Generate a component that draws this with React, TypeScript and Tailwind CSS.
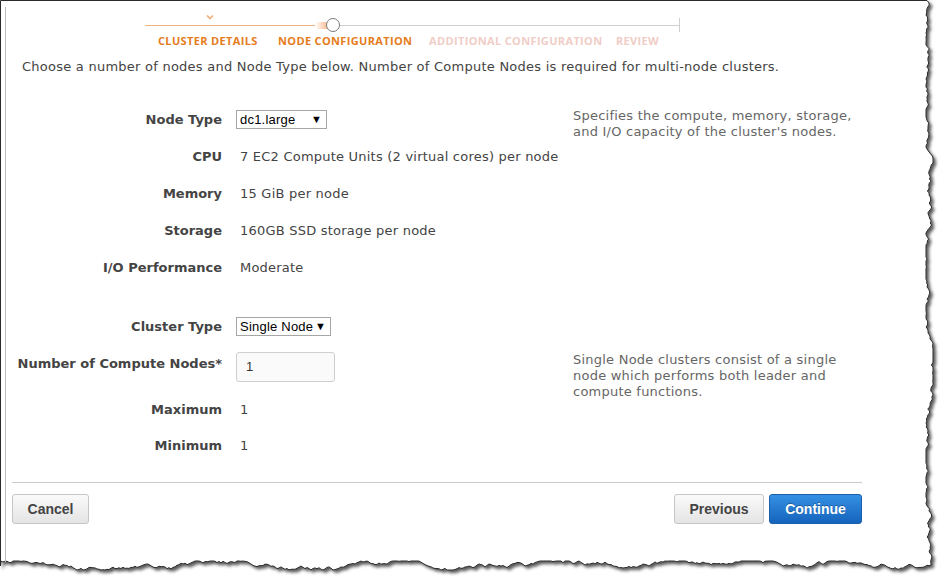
import React from "react";

function rand(seed: number) {
  let s = seed;
  return () => {
    s = (s * 9301 + 49297) % 233280;
    return s / 233280;
  };
}

function paperPath() {
  const r = rand(7);
  const pts: string[] = ["M0.5,0.5", "L927,0.5"];
  let x = 929;
  for (let y = 3; y <= 566; y += 2) {
    x = Math.max(926, Math.min(933, x + (r() - 0.5) * 3.6));
    pts.push(`L${x.toFixed(1)},${y}`);
  }
  let y = 567;
  for (let xx = Math.round(x) - 2; xx >= 0; xx -= 2) {
    y = Math.max(561, Math.min(570, y + (r() - 0.5) * 3.4));
    pts.push(`L${xx},${y.toFixed(1)}`);
  }
  pts.push("L0.5,566", "Z");
  return pts.join(" ");
}

const Row = ({
  label,
  children,
  help,
  h = "h-[37px]",
}: {
  label: string;
  children?: React.ReactNode;
  help?: React.ReactNode;
  h?: string;
}) => (
  <div className={`flex items-center ${h}`}>
    <div className="w-[222px] text-right font-bold text-[13px] text-[#444] leading-4">{label}</div>
    <div className="ml-[18px] w-[333px] text-[13px] tracking-[0.22px] text-[#444] leading-4">{children}</div>
    {help ? (
      <div className="self-start pt-[7px] text-[13px] leading-4 tracking-[0.23px] text-[#666]">{help}</div>
    ) : null}
  </div>
);

const FakeSelect = ({ text, w }: { text: string; w: string }) => (
  <div
    className={`flex items-center justify-between ${w} h-[19px] border border-[#a6a6a6] bg-white pl-[3px] pr-[4px] font-['Liberation_Sans',Arial,sans-serif] text-[13px] text-black`}
  >
    <span>{text}</span>
    <span className="text-[11px] leading-none">▼</span>
  </div>
);

export default function App() {
  return (
    <div className="relative w-[943px] h-[583px] bg-white overflow-hidden font-['DejaVu_Sans',Verdana,sans-serif]">
      <svg className="absolute inset-0" width="943" height="583">
        <defs>
          <filter id="sh" x="-5%" y="-5%" width="110%" height="110%">
            <feDropShadow dx="2.5" dy="2.5" stdDeviation="1.6" floodColor="#000" floodOpacity="0.65" />
          </filter>
        </defs>
        <path d={paperPath()} fill="#fff" stroke="#2a2a2a" strokeWidth="1" filter="url(#sh)" />
      </svg>
      <div className="absolute left-[5px] top-[7px] h-[555px] w-px bg-[#bdbdbd]" />

      <div className="relative">
        {/* stepper */}
        <div className="pt-[18px] pl-[145px]">
          <div className="relative flex h-[14px] w-[535px] items-center">
            <div className="h-px w-[170px] bg-[#eeb27e]" />
            <div className="h-[7px] w-[14px] -mr-[3px] rounded-l-full bg-gradient-to-r from-[#ffffff] to-[#f6b384]" />
            <div className="h-[14px] w-[14px] rounded-full border-[1.5px] border-[#7a7a7a] bg-white" />
            <div className="h-px flex-1 bg-[#cfcfcf]" />
            <div className="h-[14px] w-px bg-[#cfcfcf]" />
            <svg className="absolute left-[61px] -top-[4px]" width="8" height="6" viewBox="0 0 8 6">
              <path d="M1 1.5 L4 4.5 L7 1.5" stroke="#f0ad78" strokeWidth="1.6" fill="none" />
            </svg>
          </div>
          <div className="mt-[2px] flex pl-[13px] font-['Open_Sans',sans-serif] text-[11px] font-bold leading-[14px] tracking-[0.35px]">
            <span className="w-[120px] text-[#e57c1c]">CLUSTER DETAILS</span>
            <span className="w-[151px] text-[#e57c1c]">NODE CONFIGURATION</span>
            <span className="w-[187px] text-[#f0cdc6]">ADDITIONAL CONFIGURATION</span>
            <span className="text-[#f0cdc6]">REVIEW</span>
          </div>
        </div>

        <div className="mt-[11px] pl-[22px] text-[13px] leading-4 tracking-[0.245px] text-[#444]">
          Choose a number of nodes and Node Type below. Number of Compute Nodes is required for multi-node clusters.
        </div>

        <div className="mt-[26px]">
          <Row
            label="Node Type"
            help={
              <>
                Specifies the compute, memory, storage,
                <br />
                and I/O capacity of the cluster's nodes.
              </>
            }
          >
            <div className="-ml-[4px]">
              <FakeSelect text="dc1.large" w="w-[91px]" />
            </div>
          </Row>
          <Row label="CPU">7 EC2 Compute Units (2 virtual cores) per node</Row>
          <Row label="Memory">15 GiB per node</Row>
          <Row label="Storage">160GB SSD storage per node</Row>
          <Row label="I/O Performance">Moderate</Row>
          <div className="h-[22px]" />
          <Row label="Cluster Type">
            <div className="-ml-[4px]">
              <FakeSelect text="Single Node" w="w-[95px]" />
            </div>
          </Row>
          <div className="flex h-[47px] items-start">
            <div className="w-[222px] pt-[11px] text-right font-bold text-[13px] leading-4 text-[#444]">
              Number of Compute Nodes*
            </div>
            <div className="ml-[14px] w-[337px] pt-[7px]">
              <div className="flex h-[30px] w-[99px] items-center rounded-[3px] border border-[#cfcfcf] bg-[#fafafa] pl-[9px] font-['Liberation_Sans',Arial,sans-serif] text-[13px] text-[#333]">
                1
              </div>
            </div>
            <div className="pt-[7px] text-[13px] leading-4 tracking-[0.23px] text-[#666]">
              Single Node clusters consist of a single
              <br />
              node which performs both leader and
              <br />
              compute functions.
            </div>
          </div>
          <Row label="Maximum" h="h-[36px]">1</Row>
          <Row label="Minimum" h="h-[36px]">1</Row>
        </div>

        <div className="ml-[12px] mt-[18px] w-[850px] border-t border-[#c9c9c9]" />
        <div className="ml-[12px] mt-[11px] flex w-[850px] items-center font-['Liberation_Sans',Arial,sans-serif] text-[14px] font-bold">
          <button className="h-[30px] w-[77px] rounded-[3px] border border-[#c6c6c6] bg-gradient-to-b from-[#fafafa] to-[#e4e4e4] text-[#444]">
            Cancel
          </button>
          <div className="flex-1" />
          <button className="h-[30px] w-[90px] rounded-[3px] border border-[#c6c6c6] bg-gradient-to-b from-[#fafafa] to-[#e4e4e4] text-[#444]">
            Previous
          </button>
          <button className="ml-[5px] h-[30px] w-[93px] rounded-[3px] border border-[#1a5fa8] bg-gradient-to-b from-[#3590e3] to-[#1564bd] text-white [text-shadow:0_-1px_0_rgba(0,0,0,0.3)]">
            Continue
          </button>
        </div>
      </div>
    </div>
  );
}
